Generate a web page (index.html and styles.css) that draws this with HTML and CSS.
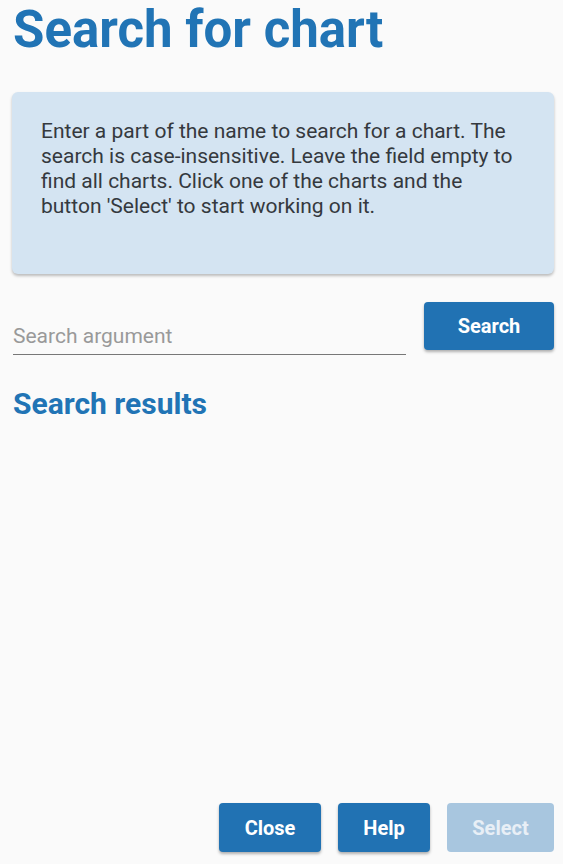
FILE: index.html
```html
<!DOCTYPE html>
<html lang="en">
<head>
<meta charset="utf-8">
<title>Search for chart</title>
<link rel="stylesheet" href="styles.css">
</head>
<body>
<main class="page">
  <h1 class="title">Search for chart</h1>
  <section class="info">
    <p>Enter a part of the name to search for a chart. The search is case-insensitive. Leave the field empty to find all charts. Click one of the charts and the button 'Select' to start working on it.</p>
  </section>
  <div class="search-row">
    <div class="field">
      <input type="text" class="input" placeholder="Search argument">
    </div>
    <button class="btn btn-search">Search</button>
  </div>
  <h2 class="subtitle">Search results</h2>
  <div class="results"></div>
  <div class="actions">
    <button class="btn btn-close">Close</button>
    <button class="btn btn-help">Help</button>
    <button class="btn btn-select" disabled>Select</button>
  </div>
</main>
</body>
</html>
```
FILE: styles.css
```css
* { box-sizing: border-box; }
html, body { margin: 0; padding: 0; }
body {
  background: #fafafa;
  font-family: Roboto, "Noto Sans", sans-serif;
  color: #3b4046;
}
.page {
  min-height: 100vh;
  display: flex;
  flex-direction: column;
  padding: 0 9px 12px 12px;
}
.title {
  margin: 0 0 0 1px;
  font-size: 51px;
  line-height: 60px;
  font-weight: 700;
  color: #2174b5;
}
.info {
  margin-top: 32px;
  height: 182px;
  background: #d4e4f2;
  border-radius: 6px;
  box-shadow: 0 2px 3px rgba(0,0,0,0.25);
  padding: 27px 29px 0 29px;
}
.info p {
  margin: 0;
  font-size: 21px;
  line-height: 25px;
  font-weight: 400;
  color: #35393e;
}
.search-row {
  margin-top: 28px;
  display: flex;
  align-items: flex-start;
  gap: 18px;
}
.field {
  flex: 0 0 393px;
  margin-left: 1px;
  padding-top: 16px;
}
.input {
  width: 100%;
  border: none;
  border-bottom: 1px solid #777;
  background: transparent;
  font-family: Roboto, sans-serif;
  font-size: 21px;
  line-height: 26px;
  padding: 5px 0 5px 0;
  color: #333;
  outline: none;
}
.input::placeholder { color: #999; }
.btn {
  border: none;
  border-radius: 4px;
  background: #2172b3;
  color: #fff;
  font-family: Roboto, sans-serif;
  font-size: 20px;
  font-weight: 700;
  height: 48px;
  box-shadow: 0 2px 3px rgba(0,0,0,0.3);
  padding: 0;
}
.btn-search { width: 131px; }
.subtitle {
  margin: 31px 0 0 1px;
  font-size: 30px;
  line-height: 36px;
  font-weight: 700;
  color: #2174b5;
}
.results { flex: 1; }
.actions {
  display: flex;
  justify-content: flex-end;
  gap: 17px;
}
.actions .btn { height: 49px; }
.btn-close { width: 102px; }
.btn-help { width: 92px; }
.btn-select {
  width: 107px;
  background: #a8c6df;
  color: #e8eff6;
  box-shadow: none;
}
```
